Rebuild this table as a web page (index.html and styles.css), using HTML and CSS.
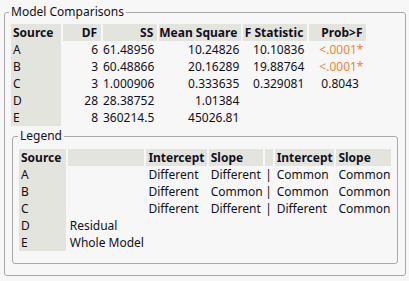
FILE: index.html
```html
<!DOCTYPE html>
<html>
<head>
<meta charset="utf-8">
<link rel="stylesheet" href="styles.css">
</head>
<body>
<fieldset class="frame outer">
  <legend class="frame-title">Model Comparisons</legend>
  <table class="grid comp">
    <thead>
      <tr>
        <th class="c-src left">Source</th>
        <th class="c-df">DF</th>
        <th class="c-ss">SS</th>
        <th class="c-ms">Mean Square</th>
        <th class="c-fs">F Statistic</th>
        <th class="c-p">Prob&gt;F</th>
      </tr>
    </thead>
    <tbody>
      <tr><td class="src">A</td><td>6</td><td>61.48956</td><td class="ms">10.24826</td><td class="fs">10.10836</td><td class="p sig">&lt;.0001*</td></tr>
      <tr><td class="src">B</td><td>3</td><td>60.48866</td><td class="ms">20.16289</td><td class="fs">19.88764</td><td class="p sig">&lt;.0001*</td></tr>
      <tr><td class="src">C</td><td>3</td><td>1.000906</td><td class="ms">0.333635</td><td class="fs">0.329081</td><td class="p p2">0.8043</td></tr>
      <tr><td class="src">D</td><td>28</td><td>28.38752</td><td class="ms">1.01384</td><td class="fs"></td><td class="p"></td></tr>
      <tr><td class="src">E</td><td>8</td><td>360214.5</td><td class="ms">45026.81</td><td class="fs"></td><td class="p"></td></tr>
    </tbody>
  </table>
  <fieldset class="frame inner">
    <legend class="frame-title">Legend</legend>
    <table class="grid leg">
      <thead>
        <tr>
          <th class="l-src">Source</th>
          <th class="l-desc"></th>
          <th class="l-int">Intercept</th>
          <th class="l-slope">Slope</th>
          <th class="l-bar"></th>
          <th class="l-int2">Intercept</th>
          <th class="l-slope2">Slope</th>
        </tr>
      </thead>
      <tbody>
        <tr><td class="src">A</td><td></td><td>Different</td><td>Different</td><td class="bar">|</td><td>Common</td><td>Common</td></tr>
        <tr><td class="src">B</td><td></td><td>Different</td><td>Common</td><td class="bar">|</td><td>Common</td><td>Common</td></tr>
        <tr><td class="src">C</td><td></td><td>Different</td><td>Different</td><td class="bar">|</td><td>Different</td><td>Common</td></tr>
        <tr><td class="src">D</td><td>Residual</td><td></td><td></td><td></td><td></td><td></td></tr>
        <tr><td class="src">E</td><td>Whole Model</td><td></td><td></td><td></td><td></td><td></td></tr>
      </tbody>
    </table>
  </fieldset>
</fieldset>
</body>
</html>
```

FILE: styles.css
```css
html, body {
  margin: 0;
  padding: 0;
  background: #f7f7f7;
}
body {
  font-family: "Noto Sans", "Open Sans", sans-serif;
  font-size: 12px;
  color: #101020;
  padding: 4px 0 0 4px;
}
.frame {
  border: 1px solid #a8a8a8;
  border-radius: 3px;
  margin: 0;
  min-width: 0;
}
.outer {
  width: 402px;
  box-sizing: border-box;
  padding: 4px 6px 11px 6px;
}
.inner {
  width: 386px;
  box-sizing: border-box;
  margin: 2px 0 0 1px;
  padding: 5px 6px 12px 6px;
}
.frame-title {
  padding: 0 2px;
  margin-left: -2px;
  line-height: 16px;
  font-size: 12px;
}
.inner .frame-title {
  margin-left: -1px;
}
.grid {
  border-collapse: separate;
  border-spacing: 2px 0;
  table-layout: fixed;
  margin: 0 -2px;
}
.grid th, .grid td {
  box-sizing: border-box;
  line-height: 17px;
  height: 17px;
  padding: 0;
  white-space: nowrap;
  overflow: visible;
}
.grid th {
  background: #e4e4df;
  font-weight: 700;
}
.comp th { text-align: right; padding-right: 4px; }
.comp td { text-align: right; padding-right: 3px; }
.comp th.left, .comp td.src, .leg th, .leg td { text-align: left; }
.grid td.src {
  background: #e4e4df;
  padding-left: 2px;
}
.grid th.left, .leg th.l-src { padding-left: 2px; }
.c-src { width: 50px; }
.c-df { width: 38px; }
.c-ss { width: 54px; }
.c-ms { width: 82px; }
.c-fs { width: 64px; }
.c-p { width: 57px; }
.comp td.ms { padding-right: 2px; }
.comp td.fs { padding-right: 3px; }
.comp td.p { text-align: left; padding-left: 10px; }
.comp td.p2 { padding-left: 12px; }
.sig { color: #e8883a; }

.leg th, .leg td { padding-left: 2px; }
.l-src { width: 50px; }
.l-desc { width: 77px; }
.l-int { width: 62px; }
.l-slope { width: 52px; }
.l-bar { width: 9px; }
.l-int2 { width: 61px; }
.l-slope2 { width: 55px; }
.leg td.bar { text-align: center; padding: 0; }
```
